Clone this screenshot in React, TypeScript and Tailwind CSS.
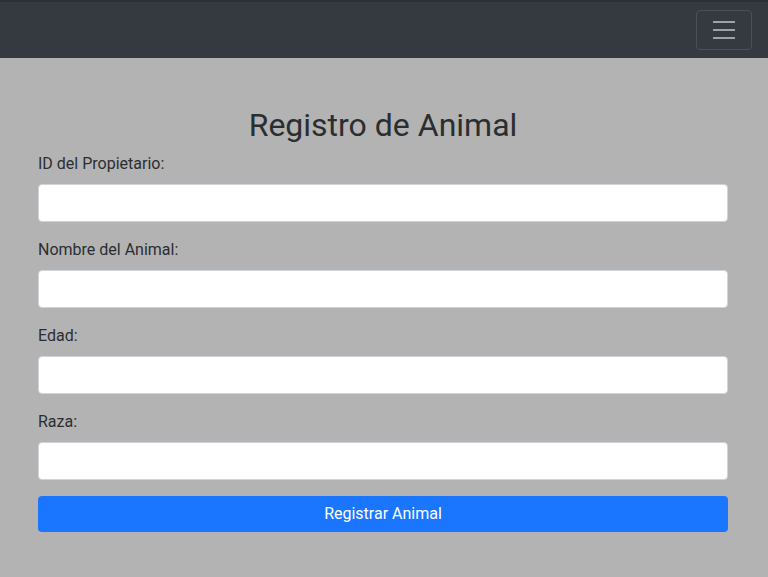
import React from "react";

export default function App() {
  const fields = ["ID del Propietario:", "Nombre del Animal:", "Edad:", "Raza:"];
  return (
    <div className="min-h-[577px] bg-[#b3b3b3] text-[#212529]" style={{ fontFamily: "Roboto, 'Liberation Sans', sans-serif" }}>
      <nav className="h-[58px] bg-[#343a40] border-t-2 border-[#2c2f33] flex items-start justify-end px-4 pt-2">
        <button className="w-[56px] h-[40px] rounded border border-[#4a5056] flex items-center justify-center">
          <svg width="30" height="30" viewBox="0 0 30 30">
            <path d="M4 7h22M4 15h22M4 23h22" stroke="#a0a3a6" strokeWidth="2" strokeLinecap="butt" />
          </svg>
        </button>
      </nav>
      <div className="pl-[38px] pr-[40px]">
        <h2 className="mt-12 mb-2 text-center text-[32px] leading-[1.2] font-normal text-[#2b2e31]">Registro de Animal</h2>
        <form>
          {fields.map((f) => (
            <div key={f} className="mb-4">
              <label className="block mb-2 text-base leading-6 text-[#2b2e31]">{f}</label>
              <input className="block w-full h-[38px] bg-white border border-[#ced4da] rounded px-3 outline-none" />
            </div>
          ))}
          <button type="button" className="w-full h-[36px] bg-[#1a76ff] text-white rounded text-base leading-6">
            Registrar Animal
          </button>
        </form>
      </div>
    </div>
  );
}
